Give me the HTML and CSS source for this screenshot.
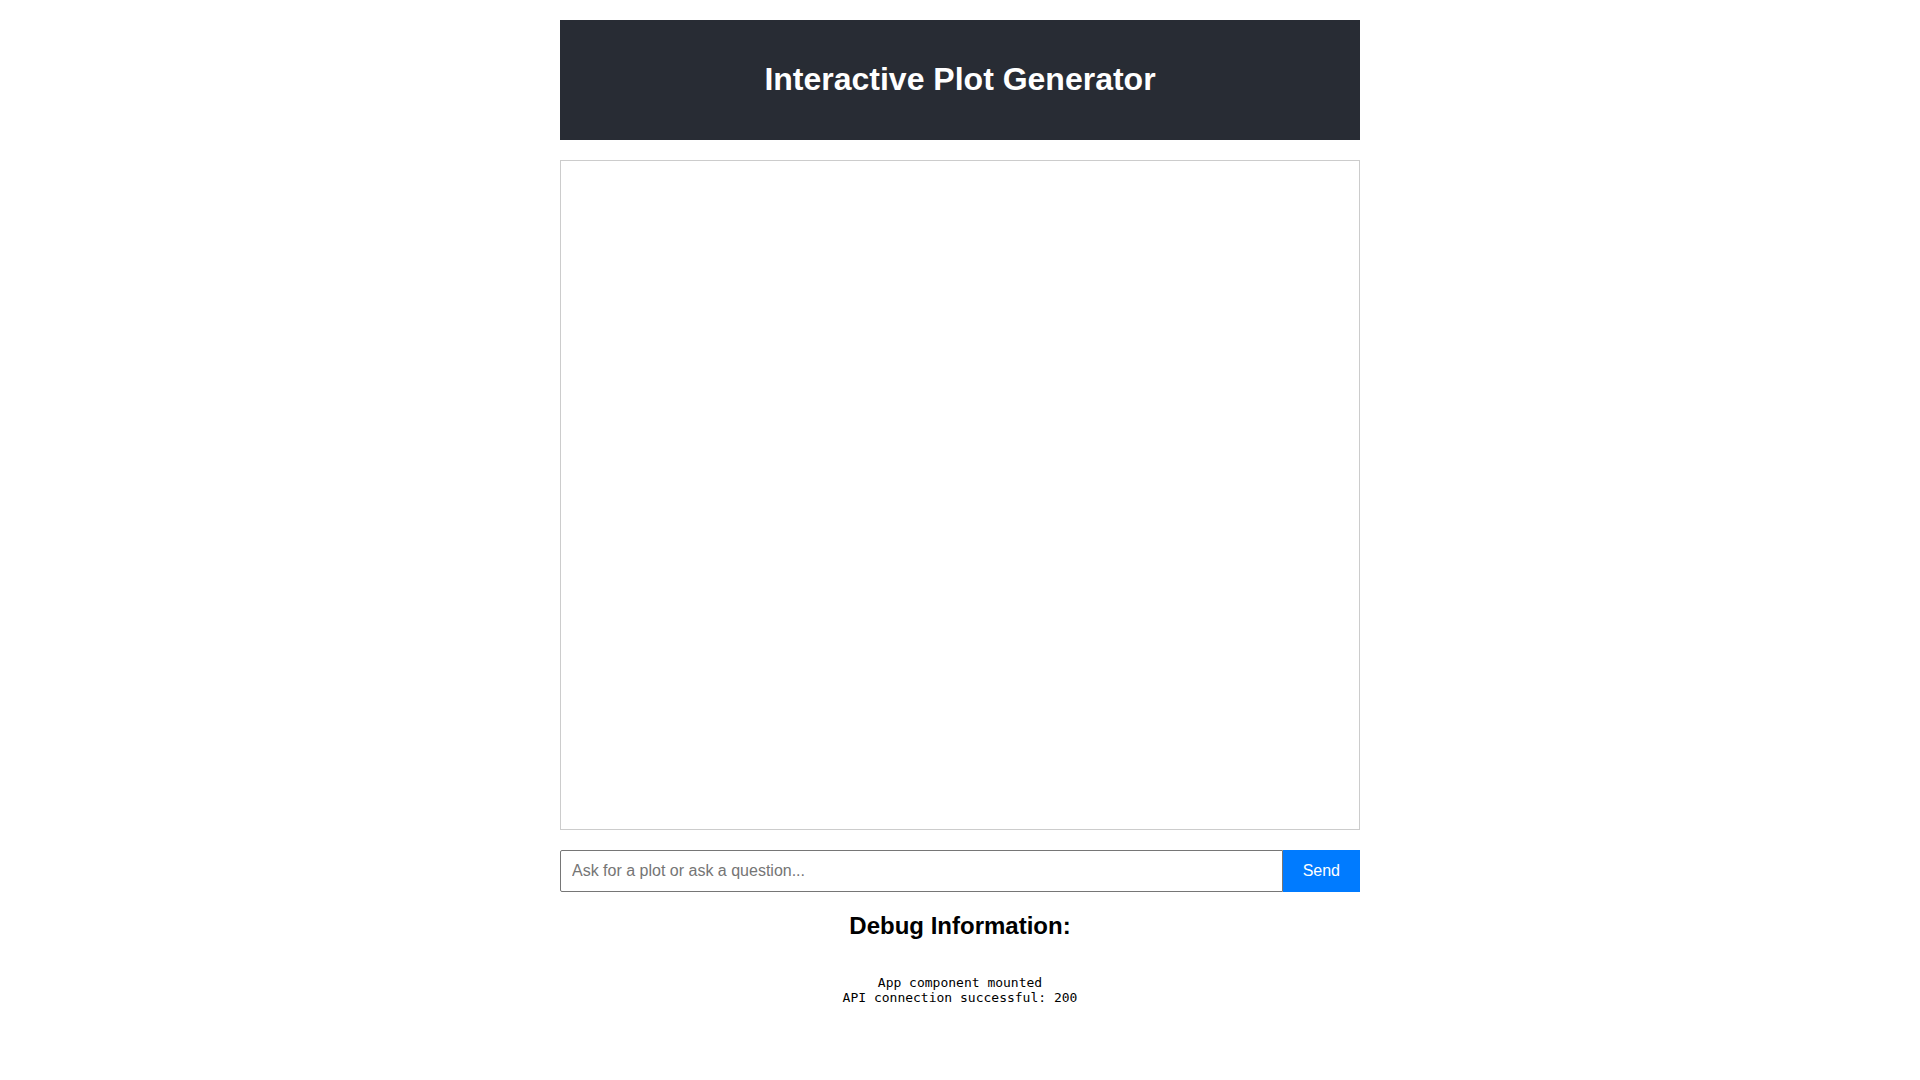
FILE: index.html
```html
<!DOCTYPE html>
<html lang="en">
<head>
<meta charset="utf-8">
<title>Interactive Plot Generator</title>
<link rel="stylesheet" href="styles.css">
</head>
<body>
<div class="app">
  <header class="app-header">
    <h1 class="app-title">Interactive Plot Generator</h1>
  </header>
  <div class="chat-box"></div>
  <form class="chat-form" onsubmit="return false;">
    <input class="chat-input" type="text" placeholder="Ask for a plot or ask a question...">
    <button class="send-btn" type="submit">Send</button>
  </form>
  <section class="debug">
    <h2 class="debug-title">Debug Information:</h2>
    <pre class="debug-log">App component mounted
API connection successful: 200</pre>
  </section>
</div>
</body>
</html>
```
FILE: styles.css
```css
html, body {
  margin: 0;
  padding: 0;
  background: #ffffff;
}
body {
  font-family: "Liberation Sans", Arial, sans-serif;
  color: #000;
}
.app {
  max-width: 800px;
  margin: 0 auto;
  padding: 20px;
}
.app-header {
  background: #282c34;
  color: #ffffff;
  padding: 20px;
  text-align: center;
  margin-bottom: 20px;
}
.app-title {
  font-size: 32px;
  font-weight: bold;
  margin: 21.44px 0;
  line-height: normal;
}
.chat-box {
  height: 668px;
  border: 1px solid #cccccc;
  margin-bottom: 20px;
  overflow-y: auto;
}
.chat-form {
  display: flex;
  margin: 0;
}
.chat-input {
  flex: 1;
  box-sizing: border-box;
  height: 42px;
  padding: 0 11px;
  font-family: "Liberation Sans", Arial, sans-serif;
  font-size: 16px;
  border: 1px solid #767676;
  border-radius: 2px 0 0 2px;
  outline: none;
  color: #000;
}
.chat-input::placeholder {
  color: #757575;
}
.send-btn {
  box-sizing: border-box;
  height: 42px;
  padding: 0 20px;
  font-family: "Liberation Sans", Arial, sans-serif;
  font-size: 16px;
  background: #007bff;
  color: #ffffff;
  border: none;
  cursor: pointer;
}
.debug {
  text-align: center;
}
.debug-title {
  font-size: 24px;
  font-weight: bold;
  margin: 20px 0 35px;
}
.debug-log {
  margin: 0;
  font-family: "DejaVu Sans Mono", monospace;
  font-size: 13px;
  text-align: center;
}
```
